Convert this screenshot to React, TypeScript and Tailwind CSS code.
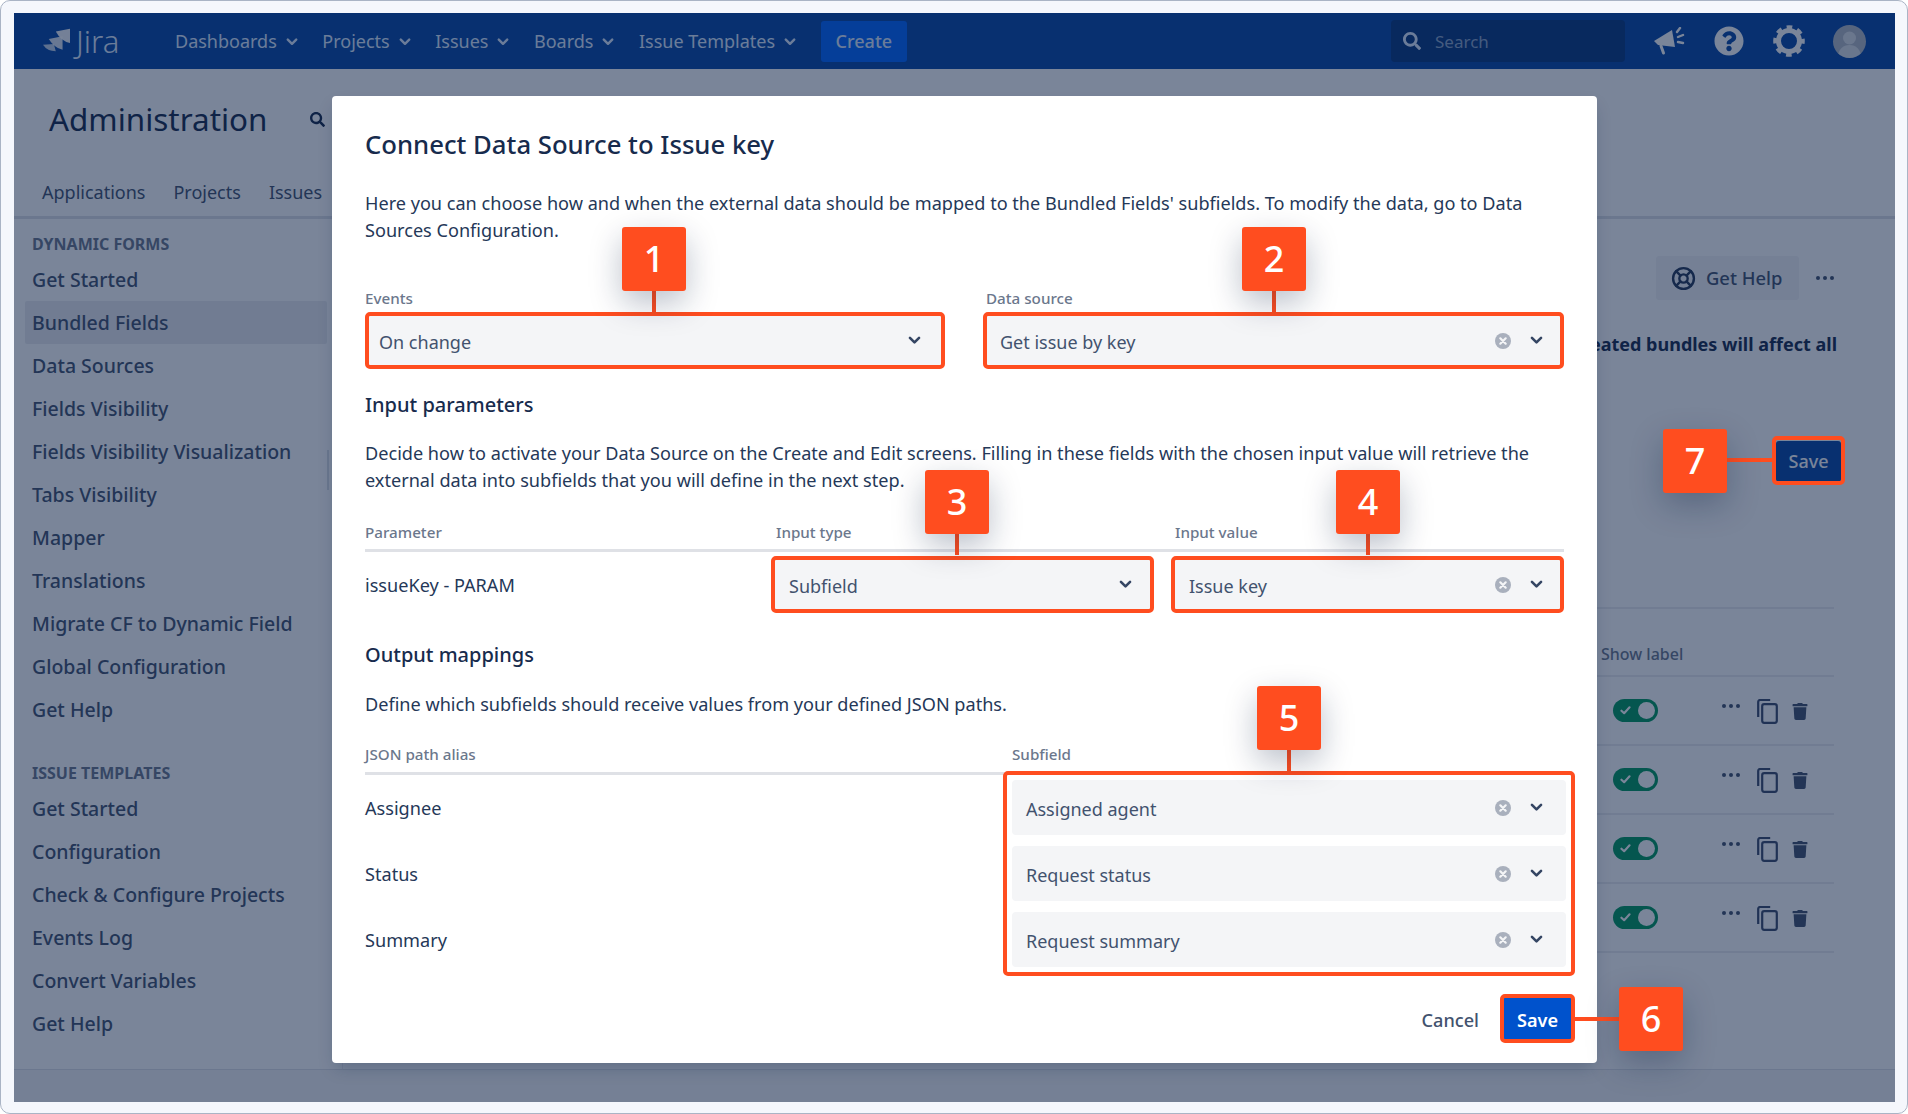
import { FaQuestionCircle, FaTrash, FaSearch } from 'react-icons/fa'
import { LifeBuoy } from 'lucide-react'

const navItems = ['Dashboards', 'Projects', 'Issues', 'Boards', 'Issue Templates']
const dynamicForms = [
  'Get Started', 'Bundled Fields', 'Data Sources', 'Fields Visibility', 'Fields Visibility Visualization',
  'Tabs Visibility', 'Mapper', 'Translations', 'Migrate CF to Dynamic Field', 'Global Configuration', 'Get Help',
]
const issueTemplates = ['Get Started', 'Configuration', 'Check & Configure Projects', 'Events Log', 'Convert Variables', 'Get Help']

function Chevron({ className }: { className?: string }) {
  return (
    <svg viewBox="0 0 12 8" className={className} fill="none" stroke="currentColor" strokeWidth="2.4" strokeLinecap="round" strokeLinejoin="round">
      <path d="M1.8 1.6 6 5.8l4.2-4.2" />
    </svg>
  )
}

function ClearIcon() {
  return (
    <svg viewBox="0 0 16 16" className="h-4 w-4">
      <circle cx="8" cy="8" r="8" fill="#a9b0bd" />
      <path d="M5.3 5.3l5.4 5.4M10.7 5.3l-5.4 5.4" stroke="#f4f5f7" strokeWidth="2.2" strokeLinecap="round" />
    </svg>
  )
}

function SelectControls({ clear = true }: { clear?: boolean }) {
  return (
    <div className="flex items-center">
      {clear && <ClearIcon />}
      <Chevron className="ml-[19px] h-[9px] w-[13px] text-[#344563]" />
    </div>
  )
}

function FramedSelect({ value, clear = true, className }: { value: string; clear?: boolean; className: string }) {
  return (
    <div className={`flex h-[57px] items-center justify-between rounded-[5px] border-4 border-[#ff4d1f] bg-[#f4f5f7] text-[18px] text-[#42526e] ${className}`}>
      <span className="pt-[3px]">{value}</span>
      <SelectControls clear={clear} />
    </div>
  )
}

function PlainSelect({ value }: { value: string }) {
  return (
    <div className="flex h-[55px] items-center justify-between rounded-[4px] bg-[#f4f5f7] pl-[14px] pr-[23px] text-[18px] text-[#42526e]">
      <span className="pt-[3px]">{value}</span>
      <SelectControls />
    </div>
  )
}

function CopyIcon() {
  return (
    <svg viewBox="0 0 21 25" className="h-[25px] w-[21px]" fill="none" stroke="#3c4b6c" strokeWidth="2.2">
      <path d="M1.200 18V3a2 2 0 0 1 2-2h10" />
      <rect x="5.200" y="5.200" width="14.600" height="18.600" rx="2" />
    </svg>
  )
}

function TableRow() {
  return (
    <div className="relative flex h-[69px] items-center border-b-2 border-[#ebecf0] pl-[19px]">
      <div className="flex h-[23px] w-[45px] items-center justify-between rounded-full bg-[#00985e] pl-[7px] pr-[3px]">
        <svg viewBox="0 0 12 10" className="h-[9px] w-[11px]" fill="none" stroke="#fff" strokeWidth="2.4" strokeLinecap="round" strokeLinejoin="round">
          <path d="M1.500 5.200 4.500 8l6-6.500" />
        </svg>
        <div className="h-[17px] w-[17px] rounded-full bg-white" />
      </div>
      <div className="ml-[64px] mb-[9px] flex gap-[3px]">
        <span className="h-1 w-1 rounded-full bg-[#42526e]" />
        <span className="h-1 w-1 rounded-full bg-[#42526e]" />
        <span className="h-1 w-1 rounded-full bg-[#42526e]" />
      </div>
      <div className="ml-[17px] mt-[2px]">
        <CopyIcon />
      </div>
      <FaTrash className="ml-[14px] mt-[2px] h-[17px] w-[16px] text-[#42526e]" />
    </div>
  )
}

function Badge({ n, className }: { n: number; className: string }) {
  return (
    <div className={`absolute flex h-16 w-16 items-center justify-center rounded-[3px] bg-[#ff4d1f] text-[36px] font-medium text-white shadow-[0_12px_32px_rgba(9,30,66,0.28)] ${className}`}>
      {n}
    </div>
  )
}

export default function App() {
  return (
    <div className="relative h-[1114px] w-[1908px] overflow-hidden rounded-[10px] border border-[#aab4c5] bg-[#f5f7fc] pb-[11px] pl-[13px] pr-[12px] pt-[12px] font-['Noto_Sans',sans-serif]">
      <div className="relative flex h-full flex-col overflow-hidden bg-white">
        {/* Top bar */}
        <header className="flex h-14 shrink-0 items-center bg-[#0747a6] text-[#deebff]">
          <div className="ml-[29px] flex w-[132px] items-center">
            <svg viewBox="0 0 80 66" className="-mt-[3px] h-[24px] w-[27px]" fill="#fff">
              <path d="M38 8 80 0v42Q53 37 38 8Z" opacity=".95" />
              <path d="M17 30l41-8v40Q34 57 17 30Z" opacity=".85" />
              <path d="M0 47l32-2 6 21Q12 66 0 47Z" opacity=".75" />
            </svg>
            <span className="ml-[6px] text-[31px] font-light leading-none">Jira</span>
          </div>
          <nav className="flex items-center text-[18px]">
            {navItems.map((item) => (
              <div key={item} className="mr-[24.5px] flex items-center gap-[9px] last:mr-[16px]">
                <span>{item}</span>
                <Chevron className="mt-px h-[8px] w-[12px]" />
              </div>
            ))}
            <button className="h-[41px] rounded-[3px] bg-[#0065ff] px-[15px] text-[18px] font-medium text-[#deebff]">Create</button>
          </nav>
          <div className="ml-auto flex items-center">
            <div className="flex h-[42px] w-[234px] items-center rounded-[4px] bg-[#07377f] pl-[12px]">
              <FaSearch className="h-[18px] w-[18px] text-[#deebff]" />
              <span className="ml-[14px] mt-[2px] text-[17px] text-[#8ba3c7]">Search</span>
            </div>
            <svg viewBox="0 0 32 28" className="ml-[28px] h-[28px] w-[32px]" fill="#fff">
              <path d="M1 14 19 3l3 17-17-2Z" />
              <path d="M8 19l2.500 7" stroke="#fff" strokeWidth="3" strokeLinecap="round" />
              <path d="M24 5l3-4M25 10l5-2M25 15l5 1" stroke="#fff" strokeWidth="2.400" strokeLinecap="round" />
            </svg>
            <FaQuestionCircle className="ml-[29px] h-[30px] w-[30px] text-white" />
            <svg viewBox="0 0 32 32" className="ml-[29px] h-[32px] w-[32px]" fill="none" stroke="#fff">
              <circle cx="16" cy="16" r="10.500" strokeWidth="5" />
              <circle cx="16" cy="16" r="13.800" strokeWidth="4" strokeDasharray="5.600 5.240" strokeDashoffset="2.800" />
            </svg>
            <div className="ml-[28px] mr-[29px] h-[33px] w-[33px] overflow-hidden rounded-full bg-[#b3bac5]">
              <svg viewBox="0 0 33 33" className="h-full w-full" fill="#fff">
                <circle cx="16.500" cy="13" r="6.500" opacity=".55" />
                <path d="M5 33c0-9 5-13 11.500-13S28 24 28 33Z" opacity=".55" />
              </svg>
            </div>
          </div>
        </header>

        {/* Admin header */}
        <div className="h-[150px] shrink-0 border-b-[3px] border-[#dfe1e6] pl-[35px]">
          <div className="mt-[26px] flex items-center">
            <h1 className="text-[31.4px] font-normal leading-[48px] text-[#172b4d]">Administration</h1>
            <FaSearch className="ml-[43px] h-[15px] w-[15px] text-[#172b4d]" />
          </div>
          <div className="mt-[37px] flex gap-[28px] text-[18px] leading-[24px] text-[#42526e]">
            <span className="-ml-[7px]">Applications</span>
            <span>Projects</span>
            <span>Issues</span>
          </div>
        </div>

        <div className="flex min-h-0 flex-1">
          {/* Sidebar */}
          <aside className="relative w-[329px] shrink-0 border-r border-[#ebecf0] pl-[11px] pt-[10px] text-[19.5px] font-medium text-[#42526e]">
            <div className="flex h-[29px] items-center pl-[7px] text-[16px] font-bold text-[#6b778c]">DYNAMIC FORMS</div>
            {dynamicForms.map((item, i) => (
              <div key={item} className={`flex h-[43px] w-[302px] items-center rounded-[2px] pl-[7px] ${i === 1 ? 'bg-[#ebecf0]' : ''}`}>
                {item}
              </div>
            ))}
            <div className="mt-[27px] flex h-[29px] items-center pl-[7px] text-[16px] font-bold text-[#6b778c]">ISSUE TEMPLATES</div>
            {issueTemplates.map((item) => (
              <div key={item} className="flex h-[43px] items-center pl-[7px]">
                {item}
              </div>
            ))}
            <div className="absolute left-[313px] top-[231px] h-[40px] w-[2px] bg-[#dfe1e6]" />
          </aside>

          {/* Page content, mostly under the dialog */}
          <main className="flex flex-1 flex-col items-end pr-[61px] pt-[37px]">
            <div className="flex h-[44px] items-center">
              <div className="flex h-[44px] w-[143px] items-center rounded-[3px] bg-[#f4f5f7] pl-[15px] text-[18.4px] font-medium text-[#42526e]">
                <LifeBuoy className="h-[25px] w-[25px] text-[#253858]" strokeWidth={2.3} />
                <span className="ml-[10px]">Get Help</span>
              </div>
              <div className="ml-[17px] flex gap-[3px]">
                <span className="h-1 w-1 rounded-full bg-[#42526e]" />
                <span className="h-1 w-1 rounded-full bg-[#42526e]" />
                <span className="h-1 w-1 rounded-full bg-[#42526e]" />
              </div>
            </div>
            <p className="-mr-[3px] mt-[31px] whitespace-nowrap text-[18px] font-bold leading-[27px] text-[#172b4d]">
              Please note that created bundles will affect all
            </p>
            <button className="-mr-[7px] mt-[83px] h-[41px] w-[65px] rounded-[3px] bg-[#0747a6] text-[18px] font-medium text-white">Save</button>
            <div className="mt-[125px] w-[240px] border-t-2 border-[#ebecf0]">
              <div className="flex h-[68px] items-center border-b-2 border-[#ebecf0] pl-[7px] pt-[24px] text-[16px] font-medium text-[#6b778c]">Show label</div>
              <TableRow />
              <TableRow />
              <TableRow />
              <TableRow />
            </div>
          </main>
        </div>

        <footer className="h-[33px] shrink-0 border-t border-[#dfe1e6] bg-[#f4f5f7]" />

        {/* Dim layer */}
        <div className="absolute inset-0 bg-[#091e42]/54" />

        {/* Dialog */}
        <div className="absolute left-[318px] top-[83px] h-[967px] w-[1265px] rounded-[4px] bg-white px-[33px] text-[18.13px] leading-[27px] text-[#253858] shadow-[0_8px_16px_-4px_rgba(9,30,66,0.25)]">
          <h2 className="mt-[31px] text-[25.7px] font-medium leading-[36px] text-[#172b4d]">Connect Data Source to Issue key</h2>
          <p className="mt-[27px]">
            Here you can choose how and when the external data should be mapped to the Bundled Fields' subfields. To modify the data, go to Data Sources Configuration.
          </p>

          <div className="mt-[44px] grid grid-cols-[580px_581px] gap-x-[38px]">
            <div>
              <div className="text-[15.2px] font-medium leading-[20px] text-[#6b778c]">Events</div>
              <FramedSelect value="On change" clear={false} className="mt-[4px] pl-[10px] pr-[20px]" />
            </div>
            <div>
              <div className="pl-[3px] text-[15.2px] font-medium leading-[20px] text-[#6b778c]">Data source</div>
              <FramedSelect value="Get issue by key" className="mt-[4px] pl-[13px] pr-[17px]" />
            </div>
          </div>

          <h3 className="mt-[21px] text-[20px] font-medium leading-[30px] text-[#172b4d]">Input parameters</h3>
          <p className="mt-[20px]">
            Decide how to activate your Data Source on the Create and Edit screens. Filling in these fields with the chosen input value will retrieve the external data into subfields that you will define in the next step.
          </p>

          <div className="mt-[28px] grid grid-cols-[389px_383px_393px] gap-x-[17px] border-b-[3px] border-[#dfe1e6] pb-[7px] text-[15.2px] font-medium leading-[20px] text-[#6b778c]">
            <div>Parameter</div>
            <div className="pl-[5px]">Input type</div>
            <div className="pl-[4px]">Input value</div>
          </div>
          <div className="mt-[4px] grid grid-cols-[389px_383px_393px] gap-x-[17px]">
            <div className="flex items-center pt-[2px]">issueKey - PARAM</div>
            <FramedSelect value="Subfield" clear={false} className="pl-[14px] pr-[18px]" />
            <FramedSelect value="Issue key" className="pl-[14px] pr-[17px]" />
          </div>

          <h3 className="mt-[27px] text-[20px] font-medium leading-[30px] text-[#172b4d]">Output mappings</h3>
          <p className="mt-[21px]">Define which subfields should receive values from your defined JSON paths.</p>

          <div className="mt-[26px] grid grid-cols-[647px_552px] border-b-[3px] border-[#dfe1e6] pb-[8px] text-[15.2px] font-medium leading-[20px] text-[#6b778c]">
            <div>JSON path alias</div>
            <div>Subfield</div>
          </div>
          <div className="grid grid-cols-[638px_572px]">
            <div className="flex flex-col gap-[11px] pt-[6px]">
              <div className="flex h-[55px] items-center">Assignee</div>
              <div className="flex h-[55px] items-center">Status</div>
              <div className="flex h-[55px] items-center">Summary</div>
            </div>
            <div className="-mt-[4px] flex h-[205px] flex-col gap-[11px] rounded-[5px] border-4 border-[#ff4d1f] bg-white px-[5px] pt-[5px]">
              <PlainSelect value="Assigned agent" />
              <PlainSelect value="Request status" />
              <PlainSelect value="Request summary" />
            </div>
          </div>

          <div className="mt-[18px] flex items-center justify-end -mr-[11px]">
            <span className="mr-[21px] pt-[3px] font-medium text-[#42526e]">Cancel</span>
            <button className="h-[49px] w-[75px] rounded-[5px] border-4 border-[#ff4d1f] bg-[#0052cc] pt-[3px] font-semibold text-white">Save</button>
          </div>
        </div>
      </div>

      {/* Callouts */}
      <div className="absolute left-[651px] top-[290px] h-[21px] w-[4px] bg-[#ff4d1f]" />
      <div className="absolute left-[1271px] top-[290px] h-[21px] w-[4px] bg-[#ff4d1f]" />
      <div className="absolute left-[954px] top-[532px] h-[22px] w-[4px] bg-[#ff4d1f]" />
      <div className="absolute left-[1365px] top-[532px] h-[22px] w-[4px] bg-[#ff4d1f]" />
      <div className="absolute left-[1286px] top-[749px] h-[21px] w-[4px] bg-[#ff4d1f]" />
      <div className="absolute left-[1574px] top-[1016px] h-[4px] w-[44px] bg-[#ff4d1f]" />
      <div className="absolute left-[1726px] top-[457px] h-[4px] w-[45px] bg-[#ff4d1f]" />
      <div className="absolute left-[1771px] top-[435px] h-[49px] w-[73px] rounded-[5px] border-4 border-[#ff4d1f]" />
      <Badge n={1} className="left-[621px] top-[226px]" />
      <Badge n={2} className="left-[1241px] top-[226px]" />
      <Badge n={3} className="left-[924px] top-[469px]" />
      <Badge n={4} className="left-[1335px] top-[469px]" />
      <Badge n={5} className="left-[1256px] top-[685px]" />
      <Badge n={6} className="left-[1618px] top-[986px]" />
      <Badge n={7} className="left-[1662px] top-[428px]" />
    </div>
  )
}
